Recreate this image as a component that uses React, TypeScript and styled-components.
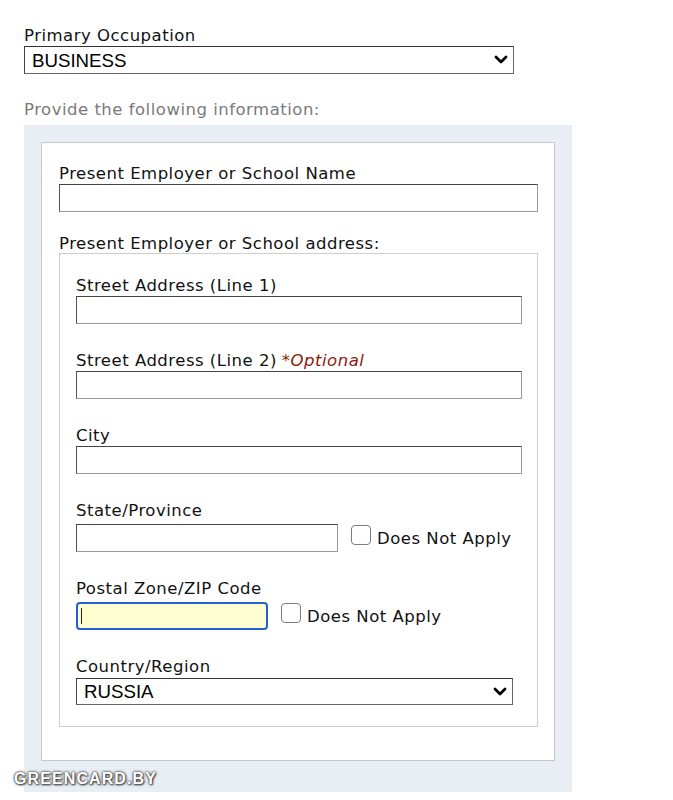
import React from 'react'
import styled, { createGlobalStyle } from 'styled-components'

const GlobalStyle = createGlobalStyle`
  body {
    margin: 0;
    background: #fff;
    font-family: 'DejaVu Sans', Verdana, sans-serif;
    color: #111;
  }
`

const Page = styled.div`
  position: relative;
  padding: 28px 0 0 24px;
  width: 649px;
  height: 800px;
  box-sizing: border-box;
`

const Label = styled.label<{ gap?: number }>`
  display: block;
  font-size: 16.5px;
  letter-spacing: 0.5px;
  line-height: 16px;
  margin-bottom: ${p => p.gap ?? 2}px;
`

const Optional = styled.span`
  color: #8c1b0e;
  font-style: italic;
  margin-left: 5px;
`

const SelectWrap = styled.div<{ width: number; height: number }>`
  position: relative;
  width: ${p => p.width}px;
  height: ${p => p.height}px;
`

const Select = styled.select`
  appearance: none;
  width: 100%;
  height: 100%;
  box-sizing: border-box;
  border: 1px solid #666;
  border-top-color: #333;
  border-left-color: #444;
  border-radius: 0;
  background: #fff;
  font-family: 'Liberation Sans', Arial, sans-serif;
  font-size: 18.7px;
  color: #000;
  padding: 0 0 0 7px;
  outline: none;
`

const Chevron = styled.svg`
  position: absolute;
  right: 6px;
  top: 50%;
  margin-top: -5px;
  pointer-events: none;
`

const Hint = styled.div`
  color: #7a7a7a;
  font-size: 16.5px;
  letter-spacing: 0.5px;
  line-height: 16px;
  margin: 28px 0 7px;
`

const Panel = styled.div`
  width: 548px;
  background: #e9eef5;
  padding: 17px 17px 31px;
  box-sizing: border-box;
`

const Box = styled.div`
  background: #fff;
  border: 1px solid #c8c8c8;
  padding: 23px 16px 33px 17px;
`

const TextInput = styled.input<{ width: number }>`
  display: block;
  width: ${p => p.width}px;
  height: 28px;
  box-sizing: border-box;
  margin: 0;
  border: 1px solid #9a9a9a;
  border-top-color: #444;
  border-left-color: #555;
  background: #fff;
  padding: 0 4px;
  outline: none;
`

const FocusWrap = styled.div`
  position: relative;
  &::after {
    content: '';
    position: absolute;
    left: 5px;
    top: 6px;
    width: 1px;
    height: 16px;
    background: #222;
  }
`

const FocusInput = styled(TextInput)`
  border: 2px solid #1f62d0;
  border-radius: 4px;
  background: #fefdd0;
`

const Field = styled.div<{ last?: boolean }>`
  margin-bottom: ${p => (p.last ? 0 : 29)}px;
`

const AddressLabel = styled(Label)`
  margin-top: 24px;
  margin-bottom: 1px;
`

const Fieldset = styled.div`
  border: 1px solid #cfcfcf;
  padding: 24px 15px 21px 16px;
`

const Row = styled.div`
  display: flex;
  align-items: flex-start;
`

const Check = styled.input`
  appearance: none;
  width: 20px;
  height: 20px;
  box-sizing: border-box;
  margin: 1px 6px 0 13px;
  border: 1px solid #7c7c7c;
  border-radius: 4px;
  background: #fff;
`

const CheckText = styled.span`
  font-size: 16.5px;
  letter-spacing: 0.5px;
  line-height: 20px;
  margin-top: 5px;
`

const Watermark = styled.div`
  position: absolute;
  left: 14px;
  top: 770px;
  font-family: 'Liberation Sans', Arial, sans-serif;
  font-weight: bold;
  font-size: 16px;
  letter-spacing: 1.1px;
  color: #fff;
  text-shadow: 0 0 2px #333, 0 0 3px #555, 1px 1px 2px #444;
`

const ChevronIcon = () => (
  <Chevron width="14" height="10" viewBox="0 0 14 10">
    <path d="M2 2 L7 7 L12 2" fill="none" stroke="#000" strokeWidth="2.8" strokeLinecap="round" strokeLinejoin="round" />
  </Chevron>
)

const DropDown = ({ value, width, height }: { value: string; width: number; height: number }) => (
  <SelectWrap width={width} height={height}>
    <Select defaultValue={value}>
      <option>{value}</option>
    </Select>
    <ChevronIcon />
  </SelectWrap>
)

const App: React.FC = () => (
  <>
    <GlobalStyle />
    <Page>
      <Label>Primary Occupation</Label>
      <DropDown value="BUSINESS" width={490} height={28} />
      <Hint>Provide the following information:</Hint>
      <Panel>
        <Box>
          <Label>Present Employer or School Name</Label>
          <TextInput width={479} />
          <AddressLabel>Present Employer or School address:</AddressLabel>
          <Fieldset>
            <Field>
              <Label>Street Address (Line 1)</Label>
              <TextInput width={446} />
            </Field>
            <Field>
              <Label>
                Street Address (Line 2)<Optional>*Optional</Optional>
              </Label>
              <TextInput width={446} />
            </Field>
            <Field>
              <Label>City</Label>
              <TextInput width={446} />
            </Field>
            <Field>
              <Label gap={5}>State/Province</Label>
              <Row>
                <TextInput width={262} />
                <Check type="checkbox" />
                <CheckText>Does Not Apply</CheckText>
              </Row>
            </Field>
            <Field>
              <Label gap={5}>Postal Zone/ZIP Code</Label>
              <Row>
                <FocusWrap>
                  <FocusInput width={192} />
                </FocusWrap>
                <Check type="checkbox" />
                <CheckText>Does Not Apply</CheckText>
              </Row>
            </Field>
            <Field last>
              <Label gap={3}>Country/Region</Label>
              <DropDown value="RUSSIA" width={437} height={27} />
            </Field>
          </Fieldset>
        </Box>
      </Panel>
      <Watermark>GREENCARD.BY</Watermark>
    </Page>
  </>
)

export default App
